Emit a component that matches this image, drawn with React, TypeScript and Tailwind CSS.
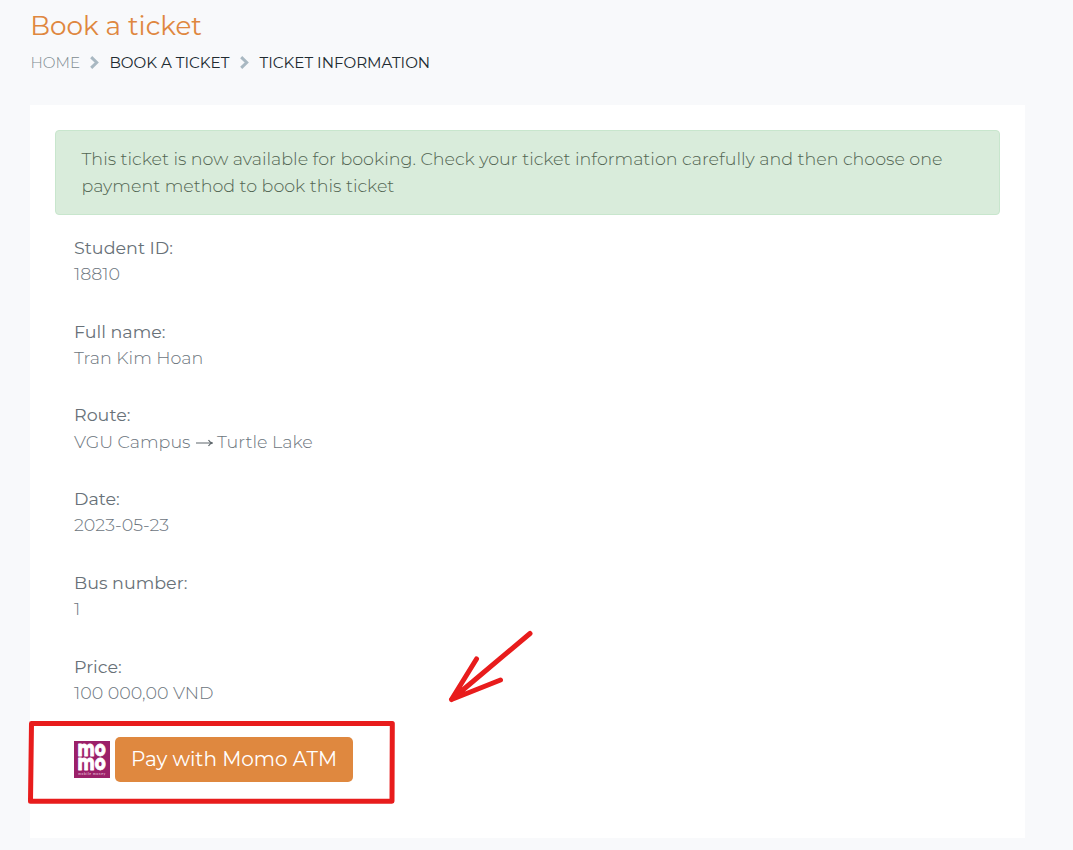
import React from "react";

type Field = { label: string; value: React.ReactNode };

const fields: Field[] = [
  { label: "Student ID:", value: "18810" },
  { label: "Full name:", value: "Tran Kim Hoan" },
  {
    label: "Route:",
    value: (
      <span className="flex items-center">
        <span className="w-[121px]">VGU Campus</span>
        <svg className="mr-[3px] mt-[2px] h-[10px] w-[19px]" viewBox="0 0 19 10" fill="none" stroke="#5f676c" strokeWidth="1.1">
          <path d="M1 5H17.5M13.5 2Q14.5 4.4 17.8 5Q14.5 5.6 13.5 8" />
        </svg>
        <span>Turtle Lake</span>
      </span>
    ),
  },
  { label: "Date:", value: "2023-05-23" },
  { label: "Bus number:", value: "1" },
  { label: "Price:", value: "100 000,00 VND" },
];

function Chevron() {
  return (
    <svg className="h-[13px] w-[10px] shrink-0" viewBox="0 0 10 13" fill="none" stroke="#a9b8c2" strokeWidth="3">
      <path d="M1.2 1.2L6.7 6.5L1.2 11.8" />
    </svg>
  );
}

function MomoLogo() {
  return (
    <svg className="h-[37px] w-[36px] shrink-0" viewBox="0 0 36 37" role="img" aria-label="MoMo">
      <rect width="36" height="37" fill="#9b2069" />
      <g fill="#fff" stroke="#fff" strokeWidth="0.8" strokeLinejoin="round" fontFamily="Montserrat, Inter, sans-serif" fontWeight="800" fontSize="21">
        <text x="3.6" y="15.4" textLength="28.2" lengthAdjust="spacingAndGlyphs">mo</text>
        <text x="3.6" y="29.4" textLength="28.2" lengthAdjust="spacingAndGlyphs">mo</text>
      </g>
      <text x="4.3" y="33.8" fill="#e5bdd5" fontFamily="Inter, sans-serif" fontWeight="600" fontSize="3" textLength="27">mobile money</text>
    </svg>
  );
}

export default function App() {
  return (
    <div className="relative h-[850px] w-full overflow-hidden bg-[#f8f9fb] pl-[30px] pr-12 font-['Montserrat','Inter',sans-serif] text-[17.5px] font-light text-[#6c757d]">
      <header className="h-[105px] pt-[9px]">
        <h1 className="h-[34px] whitespace-nowrap pl-[0.3px] text-[26.25px] leading-[34px] font-normal text-[#df873f]">Book a ticket</h1>
        <nav className="mt-[9px] flex h-[21px] items-center whitespace-nowrap pl-[0.4px] text-[15.15px] leading-[21px] font-normal text-[#212b31]">
          <span className="w-[59.6px] font-light text-[#7d8b91]">HOME</span>
          <Chevron />
          <span className="ml-[9.4px] w-[130.6px]">BOOK A TICKET</span>
          <Chevron />
          <span className="ml-[9.6px]">TICKET INFORMATION</span>
        </nav>
      </header>
      <main className="h-[733px] bg-white px-[25px] pt-[25px]">
        <div className="h-[85px] whitespace-nowrap rounded-[4px] border border-[#c8e6cd] bg-[#d9ecdb] pl-[25.5px] pt-[14px] leading-[27px] text-[#526552]">
          <p>This ticket is now available for booking. Check your ticket information carefully and then choose one</p>
          <p>payment method to book this ticket</p>
        </div>
        <dl className="pl-[19px] pt-[19.875px]">
          {fields.map((f) => (
            <div key={f.label} className="h-[83.75px] whitespace-nowrap leading-[26.25px]">
              <dt className="font-normal text-[#687178]">{f.label}</dt>
              <dd>{f.value}</dd>
            </div>
          ))}
        </dl>
        <div className="-mt-[0.875px] flex items-center gap-[5px] pl-[19px]">
          <MomoLogo />
          <button className="h-[45px] w-[238px] whitespace-nowrap rounded-[5px] bg-[#df883f] pb-px text-[20px] font-normal text-white">Pay with Momo ATM</button>
        </div>
      </main>
      <svg className="pointer-events-none absolute left-0 top-0 h-[850px] w-[1073px]" viewBox="0 0 1073 850" fill="none" stroke="#e81c1c" strokeLinecap="round" strokeLinejoin="round">
        <path d="M31.5 723.5H392.3L392 801.3H30.5Z" strokeWidth="5" />
        <path d="M530 633.5L451.5 699.5L476.5 659M451.5 699.5L500.5 680M451.5 699.5L455 698" strokeWidth="5" />
      </svg>
    </div>
  );
}
